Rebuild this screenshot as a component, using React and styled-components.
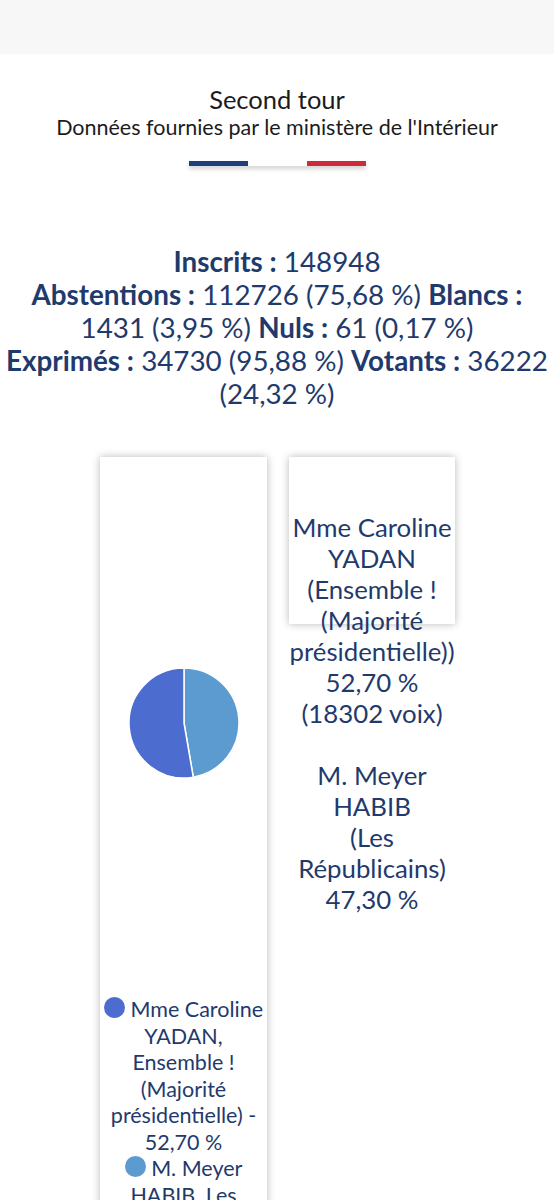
import styled, { createGlobalStyle } from 'styled-components';

const GlobalStyle = createGlobalStyle`
  body {
    margin: 0;
    background: #ffffff;
    font-family: Lato, "Open Sans", sans-serif;
  }
`;

const NAVY = '#1f3a6c';

const stats = [
  ['Inscrits', '148948'],
  ['Abstentions', '112726 (75,68 %)'],
  ['Blancs', '1431 (3,95 %)'],
  ['Nuls', '61 (0,17 %)'],
  ['Exprimés', '34730 (95,88 %)'],
  ['Votants', '36222 (24,32 %)'],
];

const candidates = [
  { name: 'Mme Caroline YADAN', party: 'Ensemble ! (Majorité présidentielle)', pct: 52.7, voix: 18302, color: '#4d6ccf' },
  { name: 'M. Meyer HABIB', party: 'Les Républicains', pct: 47.3, color: '#5c9bd0' },
];

const fmt = (n) => n.toFixed(2).replace('.', ',') + ' %';

function Pie() {
  const r = 55;
  const cx = 56;
  const cy = 56;
  // light slice drawn clockwise from top, 47,30 %
  const a = (candidates[1].pct / 100) * Math.PI * 2;
  const x = cx + r * Math.sin(a);
  const y = cy - r * Math.cos(a);
  return (
    <svg width="112" height="112" viewBox="0 0 112 112">
      <path d={`M${cx} ${cy} L${cx} ${cy - r} A${r} ${r} 0 0 1 ${x} ${y} Z`} fill={candidates[1].color} stroke="#fff" strokeWidth="1.5" />
      <path d={`M${cx} ${cy} L${x} ${y} A${r} ${r} 0 1 1 ${cx} ${cy - r} Z`} fill={candidates[0].color} stroke="#fff" strokeWidth="1.5" />
    </svg>
  );
}

function App() {
  return (
    <Page>
      <GlobalStyle />
      <TopBar />
      <Header>
        <Title>Second tour</Title>
        <Subtitle>Données fournies par le ministère de l'Intérieur</Subtitle>
        <Flag>
          <Stripe color="#1f3f7b" />
          <Stripe color="#ffffff" />
          <Stripe color="#cf2a3c" />
        </Flag>
      </Header>

      <Stats>
        {stats.map(([label, value], i) => (
          <span key={label}>
            {i === 1 || i === 4 ? <br /> : null}
            <b>{label} :</b> {value}{' '}
          </span>
        ))}
      </Stats>

      <Cards>
        <ChartCard>
          <PieBox>
            <Pie />
          </PieBox>
          <Legend>
            {candidates.map((c) => (
              <LegendItem key={c.name}>
                <Dot color={c.color} /> {c.name}, {c.party} - {fmt(c.pct)}
              </LegendItem>
            ))}
          </Legend>
        </ChartCard>
        <TextCard>
          {candidates.map((c) => (
            <p key={c.name}>
              {c.name}
              <br />
              ({c.party})
              <br />
              {fmt(c.pct)}
              {c.voix ? <><br />({c.voix} voix)</> : null}
            </p>
          ))}
        </TextCard>
      </Cards>
    </Page>
  );
}

const Page = styled.div`
  width: 554px;
  min-height: 1200px;
  overflow: hidden;
  color: ${NAVY};
`;

const TopBar = styled.div`
  height: 54px;
  background: #f7f7f7;
`;

const Header = styled.div`
  display: flex;
  flex-direction: column;
  align-items: center;
  padding-top: 30px;
  color: #1c1c1c;
`;

const Title = styled.div`
  font-size: 25.5px;
  line-height: 30px;
`;

const Subtitle = styled.div`
  font-size: 21.5px;
  line-height: 26px;
`;

const Flag = styled.div`
  display: flex;
  margin-top: 21px;
  box-shadow: 0 3px 4px rgba(0, 0, 0, 0.18);
`;

const Stripe = styled.div`
  width: 59px;
  height: 5px;
  background: ${(p) => p.color};
`;

const Stats = styled.div`
  margin-top: 79px;
  text-align: center;
  font-size: 27.8px;
  line-height: 33px;
  color: ${NAVY};

  b {
    font-weight: 700;
  }
`;

const Cards = styled.div`
  display: flex;
  justify-content: center;
  align-items: flex-start;
  gap: 22px;
  margin-top: 47px;
  padding-left: 1px;
`;

const ChartCard = styled.div`
  width: 167px;
  height: 900px;
  background: #fff;
  box-shadow: 0 0 8px rgba(0, 0, 0, 0.28);
  display: flex;
  flex-direction: column;
  align-items: center;
`;

const PieBox = styled.div`
  margin-top: 210px;
  height: 112px;
`;

const Legend = styled.div`
  margin-top: 217px;
  padding: 0 3px;
  text-align: center;
  font-size: 21.5px;
  line-height: 26.5px;
`;

const LegendItem = styled.div``;

const Dot = styled.span`
  display: inline-block;
  width: 21px;
  height: 21px;
  border-radius: 50%;
  background: ${(p) => p.color};
  vertical-align: -1px;
`;

const TextCard = styled.div`
  width: 166px;
  height: 167px;
  background: #fff;
  box-shadow: 0 0 8px rgba(0, 0, 0, 0.28);
  box-sizing: border-box;
  padding-top: 55px;
  text-align: center;
  font-size: 25.8px;
  line-height: 31px;

  p {
    margin: 0 0 31px;
  }
`;

export default App;
